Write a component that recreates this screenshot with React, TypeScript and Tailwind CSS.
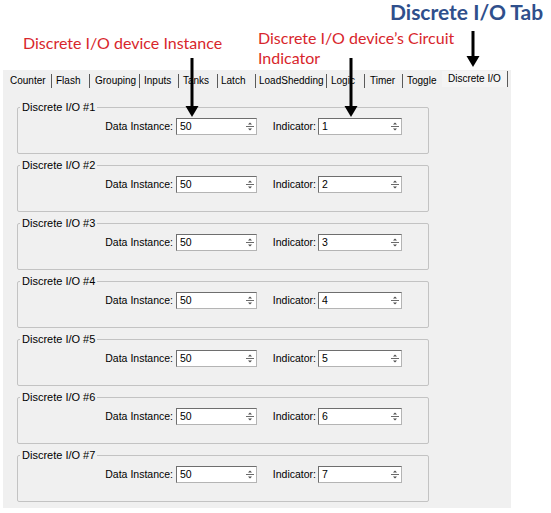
import React from "react";

// Tab strip: width and left padding per tab so the separators land where the screenshot has them
const tabs: { label: string; w: string; pl: string; sep: boolean }[] = [
  { label: "Counter", w: "w-[49px]", pl: "pl-[7px]", sep: true },
  { label: "Flash", w: "w-[38px]", pl: "pl-[4px]", sep: true },
  { label: "Grouping", w: "w-[50px]", pl: "pl-[5px]", sep: true },
  { label: "Inputs", w: "w-[39px]", pl: "pl-[4px]", sep: true },
  { label: "Tanks", w: "w-[39px]", pl: "pl-[4px]", sep: true },
  { label: "Latch", w: "w-[38px]", pl: "pl-[3px]", sep: true },
  { label: "LoadShedding", w: "w-[71px]", pl: "pl-[3px]", sep: true },
  { label: "Logic", w: "w-[38px]", pl: "pl-[4px]", sep: true },
  { label: "Timer", w: "w-[38px]", pl: "pl-[5px]", sep: true },
  { label: "Toggle", w: "w-[39px]", pl: "pl-[4px]", sep: false },
];

const groups = [1, 2, 3, 4, 5, 6, 7];

const Spinner: React.FC = () => (
  <svg width="10" height="13" viewBox="0 0 10 13" className="shrink-0">
    <path d="M3 4.5 L5 2.5 L7 4.5 Z" fill="#4a4a4a" />
    <line x1="1" y1="6.5" x2="9" y2="6.5" stroke="#6a6a6a" strokeWidth="1" />
    <path d="M3 8.5 L5 10.5 L7 8.5 Z" fill="#4a4a4a" />
  </svg>
);

const SpinBox: React.FC<{ value: string; width: string }> = ({ value, width }) => (
  <div
    className={`${width} h-[17px] bg-white border border-[#b4b4b4] border-t-[#6e6e6e] border-l-[#6e6e6e] flex items-center pl-[3px] pr-[1px]`}
  >
    <span className="flex-1 leading-none">{value}</span>
    <Spinner />
  </div>
);

const Arrow: React.FC<{ className: string; h: number }> = ({ className, h }) => (
  <svg width="14" height={h} viewBox={`0 0 14 ${h}`} className={`absolute ${className}`}>
    <rect x="5.5" y="0" width="3" height={h - 9} fill="#000" />
    <path d={`M0.5 ${h - 11} L13.5 ${h - 11} L7 ${h} Z`} fill="#000" />
  </svg>
);

const App: React.FC = () => {
  return (
    <div className="relative w-[551px] h-[513px] bg-white overflow-hidden font-['Liberation_Sans',Arial,sans-serif] text-[10.5px] text-black">
      {/* Callout labels */}
      <div className="absolute left-[390px] top-[1px] font-['Lato',sans-serif] font-bold text-[21px] leading-none text-[#2f4f8c] whitespace-nowrap">
        Discrete I/O Tab
      </div>
      <div className="absolute left-[23px] top-[35px] font-['Lato',sans-serif] text-[16px] leading-none text-[#d8262c] whitespace-nowrap">
        Discrete I/O device Instance
      </div>
      <div className="absolute left-[258px] top-[28px] font-['Lato',sans-serif] text-[16px] leading-[20px] text-[#d8262c] whitespace-nowrap">
        Discrete I/O device’s Circuit
        <br />
        Indicator
      </div>

      {/* Window */}
      <div className="pt-[70px] pl-[3px]">
        <div className="w-[508px] h-[438px] bg-[#f0f0f0]">
          <div className="flex h-[21px] items-center">
            {tabs.map((t) => (
              <div
                key={t.label}
                className={`${t.w} ${t.pl} h-[14px] flex items-center whitespace-nowrap text-[10px] ${
                  t.sep ? "border-r border-[#5a5a5a]" : ""
                }`}
              >
                {t.label}
              </div>
            ))}
            <div className="w-[66px] pl-[6px] h-[16px] -mt-[4px] flex items-center whitespace-nowrap text-[10px] border-r border-[#5a5a5a] bg-[#f4f4f4]">
              Discrete I/O
            </div>
          </div>

          <div className="pt-[10px] pl-[14px] flex flex-col gap-[5px]">
            {groups.map((n) => (
              <fieldset
                key={n}
                className="w-[412px] h-[53px] border border-[#c3c3c3] rounded-[2px] px-0"
              >
                <legend className="ml-[2px] px-[2px] leading-[12px] text-[11px]">Discrete I/O #{n}</legend>
                <div className="flex items-center mt-[5px]">
                  <span className="w-[155px] text-right whitespace-nowrap">Data Instance:</span>
                  <div className="ml-[3px]">
                    <SpinBox value="50" width="w-[81px]" />
                  </div>
                  <span className="w-[59px] text-right whitespace-nowrap">Indicator:</span>
                  <div className="ml-[2px]">
                    <SpinBox value={String(n)} width="w-[84px]" />
                  </div>
                </div>
              </fieldset>
            ))}
          </div>
        </div>
      </div>

      {/* Callout arrows */}
      <Arrow className="left-[185px] top-[58px]" h={59} />
      <Arrow className="left-[344px] top-[58px]" h={59} />
      <Arrow className="left-[466px] top-[31px]" h={36} />
    </div>
  );
};

export default App;
